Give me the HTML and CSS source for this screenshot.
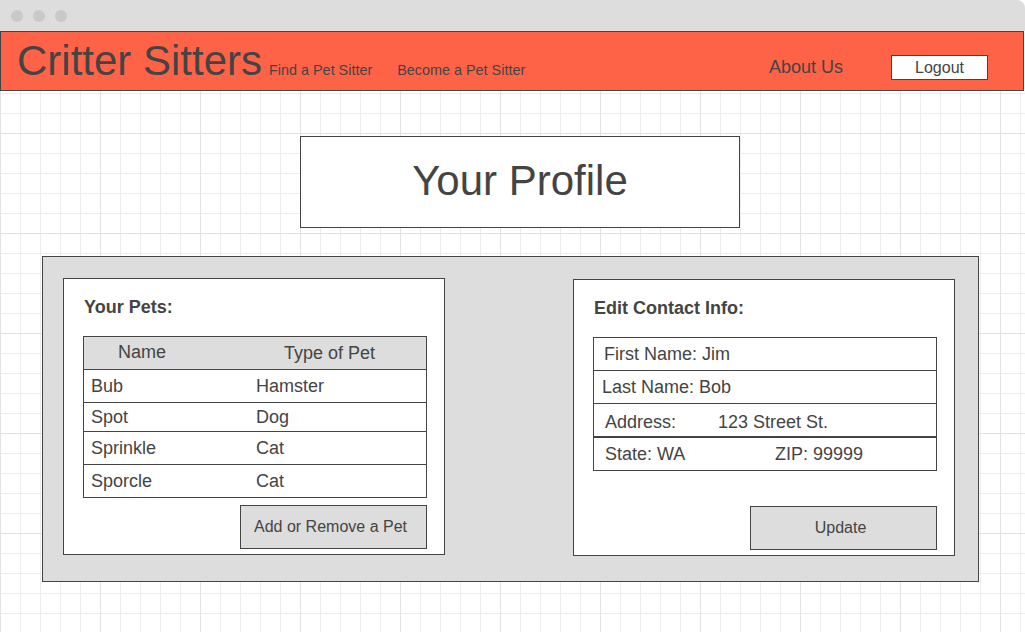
FILE: index.html
```html
<!DOCTYPE html>
<html lang="en">
<head>
<meta charset="utf-8">
<title>Critter Sitters - Your Profile</title>
<link rel="stylesheet" href="styles.css">
</head>
<body>
<div class="window">
  <div class="titlebar">
    <span class="dot"></span><span class="dot"></span><span class="dot"></span>
  </div>
  <header class="topnav">
    <div class="brand-group">
      <span class="brand">Critter Sitters</span>
      <a class="nav-link" href="#">Find a Pet Sitter</a>
      <a class="nav-link nav-link-second" href="#">Become a Pet Sitter</a>
    </div>
    <div class="nav-right">
      <a class="about" href="#">About Us</a>
      <button class="logout" type="button">Logout</button>
    </div>
  </header>
  <main class="canvas">
    <h1 class="profile-title">Your Profile</h1>
    <section class="panel">
      <div class="card">
        <h2 class="card-title">Your Pets:</h2>
        <div class="pet-table">
          <div class="pet-row pet-head"><span class="cell head-name">Name</span><span class="cell head-type">Type of Pet</span></div>
          <div class="pet-row"><span class="cell">Bub</span><span class="cell">Hamster</span></div>
          <div class="pet-row pet-row-short"><span class="cell">Spot</span><span class="cell">Dog</span></div>
          <div class="pet-row"><span class="cell">Sprinkle</span><span class="cell">Cat</span></div>
          <div class="pet-row"><span class="cell">Sporcle</span><span class="cell">Cat</span></div>
        </div>
        <button class="action pets-action" type="button">Add or Remove a Pet</button>
      </div>
      <div class="card card-right">
        <h2 class="card-title">Edit Contact Info:</h2>
        <div class="contact-box">
          <div class="contact-row first-row">First Name: Jim</div>
          <div class="contact-row last-row">Last Name: Bob</div>
          <div class="contact-row address-row"><span class="address-label">Address:</span><span>123 Street St.</span></div>
          <div class="contact-row state-row"><span class="state-label">State: WA</span><span>ZIP: 99999</span></div>
        </div>
        <button class="action update-action" type="button">Update</button>
      </div>
    </section>
  </main>
</div>
</body>
</html>
```
FILE: styles.css
```css
* {
  box-sizing: border-box;
}

html, body {
  margin: 0;
  padding: 0;
  background: #ffffff;
}

body {
  font-family: "Liberation Sans", Arial, sans-serif;
  color: #444444;
  overflow: hidden;
}

.window {
  width: 1025px;
  height: 632px;
  display: flex;
  flex-direction: column;
}

.titlebar {
  height: 31px;
  flex: none;
  background: #dddddd;
  border-top-right-radius: 8px;
  display: flex;
  align-items: center;
  gap: 10px;
  padding-left: 11px;
}

.dot {
  width: 12px;
  height: 12px;
  border-radius: 50%;
  background: #c9c9c9;
}

.topnav {
  width: 1024px;
  height: 60px;
  flex: none;
  background: #ff6347;
  border: 1px solid #444444;
  display: flex;
  justify-content: space-between;
  align-items: flex-start;
}

.brand-group {
  display: flex;
  align-items: baseline;
  margin-top: 5px;
  padding-left: 16px;
}

.brand {
  font-size: 42px;
  line-height: 48px;
  color: #444444;
}

.nav-link {
  font-size: 14.4px;
  color: #444444;
  text-decoration: none;
  margin-left: 7px;
}

.nav-link-second {
  margin-left: 25px;
}

.nav-right {
  display: flex;
  align-items: flex-start;
  gap: 48px;
  margin-top: 23px;
  margin-right: 35px;
}

.about {
  font-size: 18px;
  color: #444444;
  text-decoration: none;
  line-height: 21px;
  margin-top: 2px;
}

.logout {
  width: 97px;
  height: 25px;
  padding: 1px 0 0 0;
  margin: 0;
  background: #ffffff;
  border: 1px solid #444444;
  font-family: "Liberation Sans", Arial, sans-serif;
  font-size: 16px;
  line-height: 22px;
  color: #444444;
}

.canvas {
  flex: 1;
  background-color: #ffffff;
  background-image:
    linear-gradient(#e2e2e2 1px, transparent 1px),
    linear-gradient(90deg, #e2e2e2 1px, transparent 1px),
    linear-gradient(#ededed 1px, transparent 1px),
    linear-gradient(90deg, #ededed 1px, transparent 1px);
  background-size: 100px 100px, 100px 100px, 20px 20px, 20px 20px;
  background-position: 0 42px, 0 0, 0 2px, 0 0;
  padding-top: 45px;
}

.profile-title {
  margin: 0 0 0 300px;
  width: 440px;
  height: 92px;
  background: #ffffff;
  border: 1px solid #444444;
  font-size: 42px;
  font-weight: normal;
  line-height: 88px;
  text-align: center;
  color: #444444;
}

.panel {
  margin: 28px 0 0 42px;
  width: 937px;
  height: 326px;
  background: #dddddd;
  border: 1px solid #444444;
  display: flex;
  justify-content: space-between;
  align-items: flex-start;
  padding: 21px 23px 0 20px;
}

.card {
  width: 382px;
  height: 277px;
  background: #ffffff;
  border: 1px solid #444444;
  display: flex;
  flex-direction: column;
  padding: 0 17px 0 19px;
}

.card-right {
  margin-top: 1px;
}

.card-title {
  margin: 0;
  padding: 18px 0 0 1px;
  height: 39px;
  font-size: 18px;
  font-weight: bold;
  line-height: 21px;
  color: #444444;
}

.pet-table {
  margin-top: 18px;
  width: 344px;
  border: 1px solid #444444;
}

.pet-row {
  display: grid;
  grid-template-columns: 165px 1fr;
  height: 33px;
  border-top: 1px solid #444444;
  font-size: 18px;
  line-height: 32px;
}

.pet-row:first-child {
  border-top: none;
  height: 32px;
}

.pet-row-short {
  height: 29px;
  line-height: 28px;
}

.pet-head {
  background: #dddddd;
}

.cell {
  padding-left: 7px;
  white-space: nowrap;
}

.head-name {
  padding-left: 34px;
  padding-bottom: 2px;
  line-height: 30px;
}

.head-type {
  padding-left: 35px;
}

.action {
  align-self: flex-end;
  width: 187px;
  height: 44px;
  padding: 0 6px 0 0;
  background: #dddddd;
  border: 1px solid #444444;
  font-family: "Liberation Sans", Arial, sans-serif;
  font-size: 16px;
  color: #444444;
}

.pets-action {
  margin-top: 7px;
}

.contact-box {
  margin-top: 18px;
  width: 344px;
  border: 1px solid #444444;
}

.contact-row {
  display: flex;
  height: 33px;
  line-height: 32px;
  font-size: 18px;
  border-bottom: 1px solid #444444;
  white-space: nowrap;
}

.first-row {
  padding-left: 10px;
}

.last-row {
  padding-left: 8px;
}

.address-row {
  padding-left: 11px;
  padding-top: 4px;
  line-height: 28px;
}

.address-label {
  width: 113px;
}

.state-row {
  border-top: 1px solid #444444;
  border-bottom: none;
  height: 33px;
  padding-left: 11px;
}

.state-label {
  width: 170px;
}

.update-action {
  margin-top: 35px;
}
```
